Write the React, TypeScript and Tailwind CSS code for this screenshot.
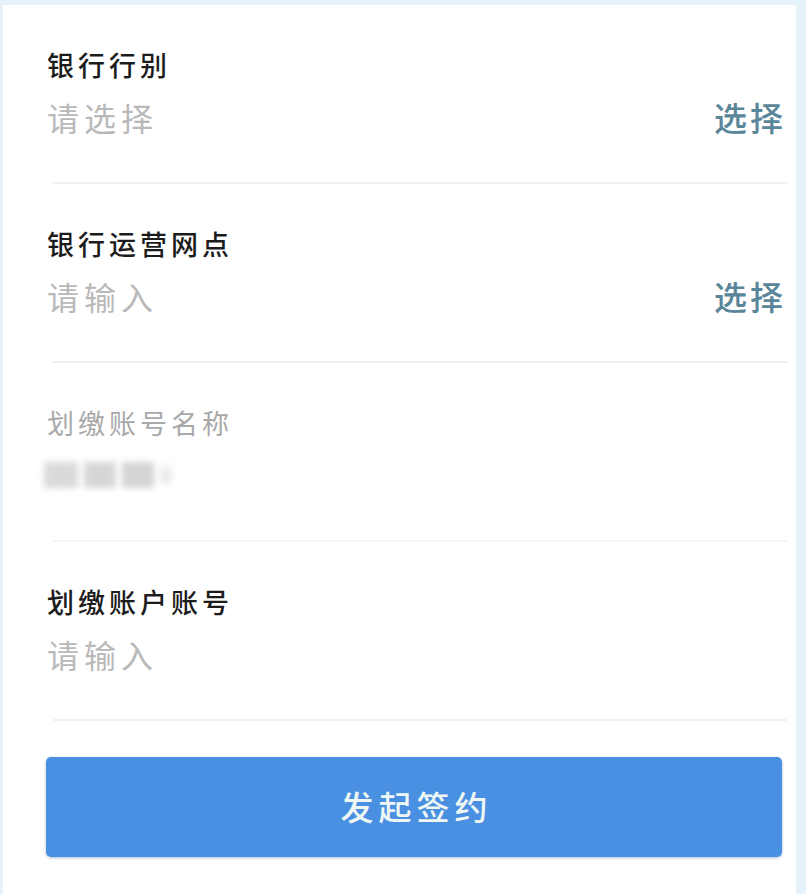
import React from "react";

const font = { fontFamily: '"Noto Sans CJK SC", "Noto Sans", sans-serif' };

function Sep({ light }: { light?: boolean }) {
  return <div className={`ml-[50px] mr-[9px] h-[2px] ${light ? "bg-[#f4f5f5]" : "bg-[#eff0f0]"}`} />;
}

function Row({
  label,
  placeholder,
  action,
  muted,
  blurred,
}: {
  label: string;
  placeholder?: string;
  action?: string;
  muted?: boolean;
  blurred?: boolean;
}) {
  return (
    <div className="pl-[44px] pr-[10px] pt-[45px] pb-[45px]">
      <div
        className={`h-[30px] leading-[30px] text-[27px] tracking-[4px] ${
          muted ? "text-[#a9a9a9] font-normal" : "text-[#1c1c1c] font-medium"
        }`}
      >
        {label}
      </div>
      <div className="mt-[17px] h-[40px] flex items-center justify-between">
        {blurred ? (
          <div className="flex items-center gap-[6px] blur-[3px] -ml-[3px]">
            <div className="w-[34px] h-[26px] bg-[#dadada]" />
            <div className="w-[32px] h-[26px] bg-[#d6d6d6]" />
            <div className="w-[32px] h-[26px] bg-[#d4d4d4]" />
            <div className="w-[12px] h-[18px] bg-[#ececec]" />
          </div>
        ) : (
          <span className="text-[32px] leading-[40px] tracking-[5px] text-[#b9b9b9]">{placeholder}</span>
        )}
        {action && (
          <span className="text-[33px] leading-[40px] tracking-[3px] text-[#5a8699] font-medium">{action}</span>
        )}
      </div>
    </div>
  );
}

export default function App() {
  return (
    <div style={font} className="w-[806px] h-[894px] bg-[#e6f2fa] pt-[5px] pl-[3px] pr-[10px] overflow-hidden">
      <div className="h-full bg-white">
        <Row label="银行行别" placeholder="请选择" action="选择" />
        <Sep />
        <Row label="银行运营网点" placeholder="请输入" action="选择" />
        <Sep />
        <Row label="划缴账号名称" muted blurred />
        <Sep light />
        <Row label="划缴账户账号" placeholder="请输入" />
        <Sep />
        <div className="ml-[43px] mr-[14px] mt-[36px] h-[100px] rounded-[5px] bg-[#4a90e2] shadow-[0_1px_3px_rgba(40,80,140,0.35)] flex items-center justify-center">
          <span className="text-[33px] tracking-[5px] text-[#eef7f3] font-medium pl-[5px]">发起签约</span>
        </div>
      </div>
    </div>
  );
}
